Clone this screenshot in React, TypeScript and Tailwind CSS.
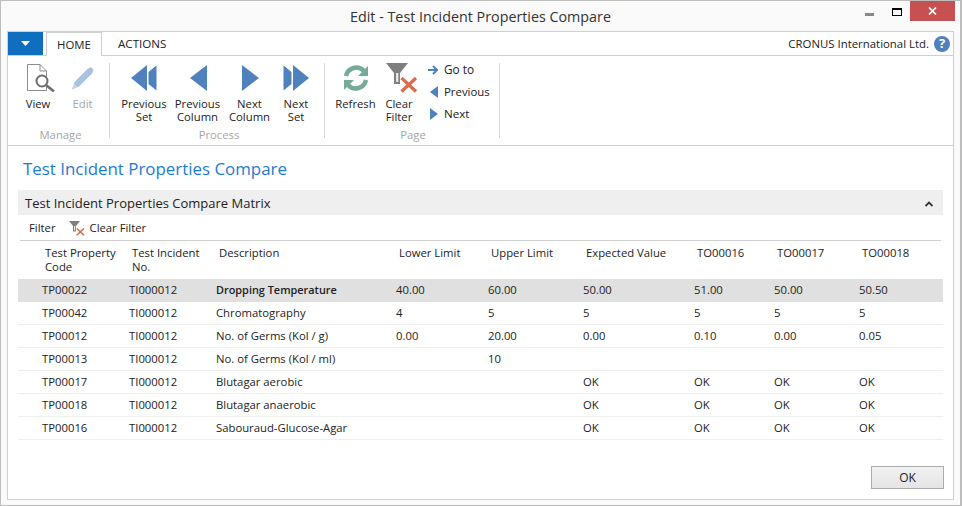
const font = { fontFamily: '"Open Sans", "Noto Sans", sans-serif' };

const cols = "grid grid-cols-[87px_87px_180px_92px_95px_111px_80px_85px_1fr]";

const rows = [
  ["TP00022", "TI000012", "Dropping Temperature", "40.00", "60.00", "50.00", "51.00", "50.00", "50.50"],
  ["TP00042", "TI000012", "Chromatography", "4", "5", "5", "5", "5", "5"],
  ["TP00012", "TI000012", "No. of Germs (Kol / g)", "0.00", "20.00", "0.00", "0.10", "0.00", "0.05"],
  ["TP00013", "TI000012", "No. of Germs (Kol / ml)", "", "10", "", "", "", ""],
  ["TP00017", "TI000012", "Blutagar aerobic", "", "", "OK", "OK", "OK", "OK"],
  ["TP00018", "TI000012", "Blutagar anaerobic", "", "", "OK", "OK", "OK", "OK"],
  ["TP00016", "TI000012", "Sabouraud-Glucose-Agar", "", "", "OK", "OK", "OK", "OK"],
];

const headers = ["Test Property Code", "Test Incident No.", "Description", "Lower Limit", "Upper Limit", "Expected Value", "TO00016", "TO00017", "TO00018"];

function Double({ dir }: { dir: "l" | "r" }) {
  return (
    <svg width="26" height="26" viewBox="0 0 26 26" className={dir === "r" ? "-scale-x-100" : ""}>
      <path d="M0 13 L16 0 V26 Z" fill="#4f81bd" />
      <path d="M17.5 7 L25.5 0.5 V25.5 L17.5 19 Z" fill="#4f81bd" />
    </svg>
  );
}

function Single({ dir }: { dir: "l" | "r" }) {
  return (
    <svg width="17" height="26" viewBox="0 0 17 26" className={`translate-x-[1px] ${dir === "r" ? "-scale-x-100" : ""}`}>
      <path d="M0 13 L17 0 V26 Z" fill="#4f81bd" />
    </svg>
  );
}

function BigBtn({ icon, label, grey, w }: { icon: React.ReactNode; label: string[]; grey?: boolean; w: string }) {
  return (
    <div className={`flex flex-col items-center ${w}`}>
      <div className="h-[32px] flex items-center justify-center">{icon}</div>
      <div className={`mt-[3px] text-center leading-[13px] whitespace-nowrap ${grey ? "text-[#a6a6a6]" : "text-[#222]"}`}>
        {label.map((l) => (
          <div key={l}>{l}</div>
        ))}
      </div>
    </div>
  );
}

function FunnelX({ small }: { small?: boolean }) {
  return (
    <svg width={small ? 16 : 32} height={small ? 15 : 30} viewBox="0 0 32 30" className={small ? "" : "translate-x-[3px]"}>
      <path d="M0 0 H22 L14 10 V21 H8 V10 Z" fill="#7f7f7f" />
      <rect x="10" y="10" width="2.4" height="9" fill="#e4e4e4" />
      <path d="M15.5 15 L30 28.5 M30 15 L15.5 28.5" stroke="#dc6a4c" strokeWidth="3.2" />
    </svg>
  );
}

export default function App() {
  return (
    <div style={font} className="w-[962px] h-[506px] bg-[#fafafa] border border-[#bdbdbd] border-r-[2px] flex flex-col text-[11.3px] text-[#222] overflow-hidden">
      <div className="h-[30px] shrink-0 flex items-center relative">
        <div className="flex-1 text-center text-[14.3px] text-[#333] pt-[1px]">Edit - Test Incident Properties Compare</div>
        <div className="absolute right-[-1px] top-0 flex items-start h-[21px] pr-[6px]">
          <div className="w-[9px] h-[3px] bg-[#888] mt-[12px] mr-[18px]" />
          <div className="w-[10px] h-[8px] border border-t-[2px] border-black mt-[7px] mr-[8px]" />
          <div className="w-[45px] h-[20px] bg-[#c75050] text-white flex items-center justify-center">
            <svg width="9" height="8" viewBox="0 0 9 8"><path d="M1 0.5 L8 7.5 M8 0.5 L1 7.5" stroke="#fff" strokeWidth="1.7" /></svg>
          </div>
        </div>
      </div>

      <div className="mx-[6px] flex-1 mb-[5px] border border-[#d0d0d0] bg-white flex flex-col min-h-0">
        <div className="h-[23px] flex items-stretch shrink-0 relative">
          <div className="w-[35px] h-[23px] bg-[#106ebe] flex items-center justify-center">
            <svg width="9" height="5" viewBox="0 0 9 5"><path d="M0 0 H9 L4.5 5 Z" fill="#fff" /></svg>
          </div>
          <div className="ml-[3px] w-[56px] h-[24px] bg-white border border-[#d0d0d0] border-b-0 z-10 flex items-center justify-center text-[11.4px]">HOME</div>
          <div className="ml-[16px] flex items-center text-[11.6px]">ACTIONS</div>
          <div className="ml-auto flex items-center pr-[3px]">
            <span className="mr-[5px] text-[11.4px]">CRONUS International Ltd.</span>
            <span className="w-[16px] h-[16px] rounded-full bg-[#4f81bd] text-white text-[13px] font-bold flex items-center justify-center">?</span>
          </div>
        </div>

        <div className="h-[91px] shrink-0 border-y border-[#d0d0d0] flex items-stretch">
          <div className="w-[102px] border-r border-[#d9d9d9] my-[7px] flex flex-col">
            <div className="flex pl-[7px] -mt-[1px] flex-1">
              <BigBtn w="w-[46px]" label={["View"]} icon={
                <svg width="28" height="28" viewBox="0 0 28 28" className="translate-x-[3px]">
                  <path d="M0.5 0.5 H13 L19.5 7 V26.5 H0.5 Z M13 0.5 V7 H19.5" fill="#fff" stroke="#8c8c8c" strokeWidth="1" />
                  <circle cx="15" cy="17" r="5.5" fill="#fff" stroke="#6e6e6e" strokeWidth="2" />
                  <path d="M19 21 L27 27.5" stroke="#6e6e6e" strokeWidth="2.6" />
                </svg>
              } />
              <BigBtn w="w-[43px]" grey label={["Edit"]} icon={
                <svg width="22" height="23" viewBox="0 0 22 23">
                  <path d="M0 22.5 L2.5 15 L15.5 2 L19 0 L21.5 3 L20 6.5 L7 19.5 Z" fill="#a9c2de" />
                  <path d="M0 22.5 L2.5 17 L5 19.5 Z" fill="#c9d9ea" />
                </svg>
              } />
            </div>
            <div className="text-center text-[#a6a6a6] leading-[14px] -mb-[4px] translate-x-[2px]">Manage</div>
          </div>

          <div className="w-[215px] border-r border-[#d9d9d9] my-[7px] flex flex-col">
            <div className="flex pl-[6px] -mt-[1px] flex-1">
              <BigBtn w="w-[56px]" label={["Previous", "Set"]} icon={<Double dir="l" />} />
              <BigBtn w="w-[51px]" label={["Previous", "Column"]} icon={<Single dir="l" />} />
              <BigBtn w="w-[53px]" label={["Next", "Column"]} icon={<Single dir="r" />} />
              <BigBtn w="w-[40px]" label={["Next", "Set"]} icon={<Double dir="r" />} />
            </div>
            <div className="text-center text-[#a6a6a6] leading-[14px] -mb-[4px] translate-x-[2px]">Process</div>
          </div>

          <div className="w-[175px] border-r border-[#d9d9d9] my-[7px] flex flex-col">
            <div className="flex pl-[2px] -mt-[1px] flex-1">
              <BigBtn w="w-[57px]" label={["Refresh"]} icon={
                <svg width="28" height="28" viewBox="0 0 28 28" fill="none">
                  <path d="M4 12 A10.5 10.5 0 0 1 22 7" stroke="#76ab98" strokeWidth="4.5" />
                  <path d="M26 2 V12 H16 Z" fill="#76ab98" />
                  <path d="M24 16 A10.5 10.5 0 0 1 6 21" stroke="#76ab98" strokeWidth="4.5" />
                  <path d="M2 26 V16 H12 Z" fill="#76ab98" />
                </svg>
              } />
              <BigBtn w="w-[30px]" label={["Clear", "Filter"]} icon={<FunnelX />} />
              <div className="ml-[14px] flex flex-col gap-[5px] -mt-[1px]">
                <div className="flex items-center h-[17px] gap-[6px]">
                  <svg width="10" height="10" viewBox="0 0 10 10"><path d="M0 5 H8 M5 1 L9 5 L5 9" stroke="#4f81bd" strokeWidth="2" fill="none" /></svg>
                  <span className="text-[11.8px]">Go to</span>
                </div>
                <div className="flex items-center h-[17px] gap-[6px] pl-[2px]">
                  <svg width="8" height="12" viewBox="0 0 8 12"><path d="M0 6 L8 0 V12 Z" fill="#4f81bd" /></svg>
                  <span className="text-[11.4px]">Previous</span>
                </div>
                <div className="flex items-center h-[17px] gap-[6px] pl-[2px]">
                  <svg width="8" height="12" viewBox="0 0 8 12"><path d="M8 6 L0 0 V12 Z" fill="#4f81bd" /></svg>
                  <span className="text-[11.6px]">Next</span>
                </div>
              </div>
            </div>
            <div className="text-center text-[#a6a6a6] leading-[14px] -mb-[4px] translate-x-[1px]">Page</div>
          </div>
        </div>

        <div className="flex-1 flex flex-col px-[10px] min-h-0">
          <div className="h-[44px] shrink-0 flex items-center text-[16.9px] text-[#1c7cd0] pl-[5px] pt-[1px]">Test Incident Properties Compare</div>
          <div className="h-[25px] shrink-0 bg-[#efefef] flex items-center justify-between pl-[7px] pr-[10px] text-[13px] pt-[2px]">
            <span>Test Incident Properties Compare Matrix</span>
            <svg width="8" height="6" viewBox="0 0 8 6"><path d="M0.5 5 L4 1.5 L7.5 5" stroke="#333" strokeWidth="1.8" fill="none" /></svg>
          </div>
          <div className="h-[25px] shrink-0 flex items-center pl-[11px] gap-[13px] pt-[2px]">
            <span>Filter</span>
            <span className="flex items-center gap-[5px]">
              <FunnelX small />
              <span>Clear Filter</span>
            </span>
          </div>
          <div className={`${cols} mx-[2px] border-t border-[#d0d0d0] h-[39px] shrink-0 pl-[25px] pt-[5px] leading-[14px]`}>
            {headers.map((h, i) => (
              <div key={h} className={i < 2 ? "pr-[8px]" : ""}>{h}</div>
            ))}
          </div>
          {rows.map((r, i) => (
            <div key={r[0]} className={`${cols} h-[23px] shrink-0 items-center pl-[24px] border-b ${i === 0 ? "bg-[#e0e0e0] border-[#e0e0e0]" : "border-[#efefef]"}`}>
              {r.map((c, j) => (
                <div key={j} className={`whitespace-nowrap ${i === 0 && j === 2 ? "font-semibold text-[10.9px]" : ""}`}>{c}</div>
              ))}
            </div>
          ))}
          <div className="flex-1 flex items-end justify-end pb-[10px]">
            <button className="w-[73px] h-[23px] -mr-[1px] border border-[#acacac] bg-gradient-to-b from-[#f0f0f0] to-[#e5e5e5] text-[12px]">OK</button>
          </div>
        </div>
      </div>
    </div>
  );
}
